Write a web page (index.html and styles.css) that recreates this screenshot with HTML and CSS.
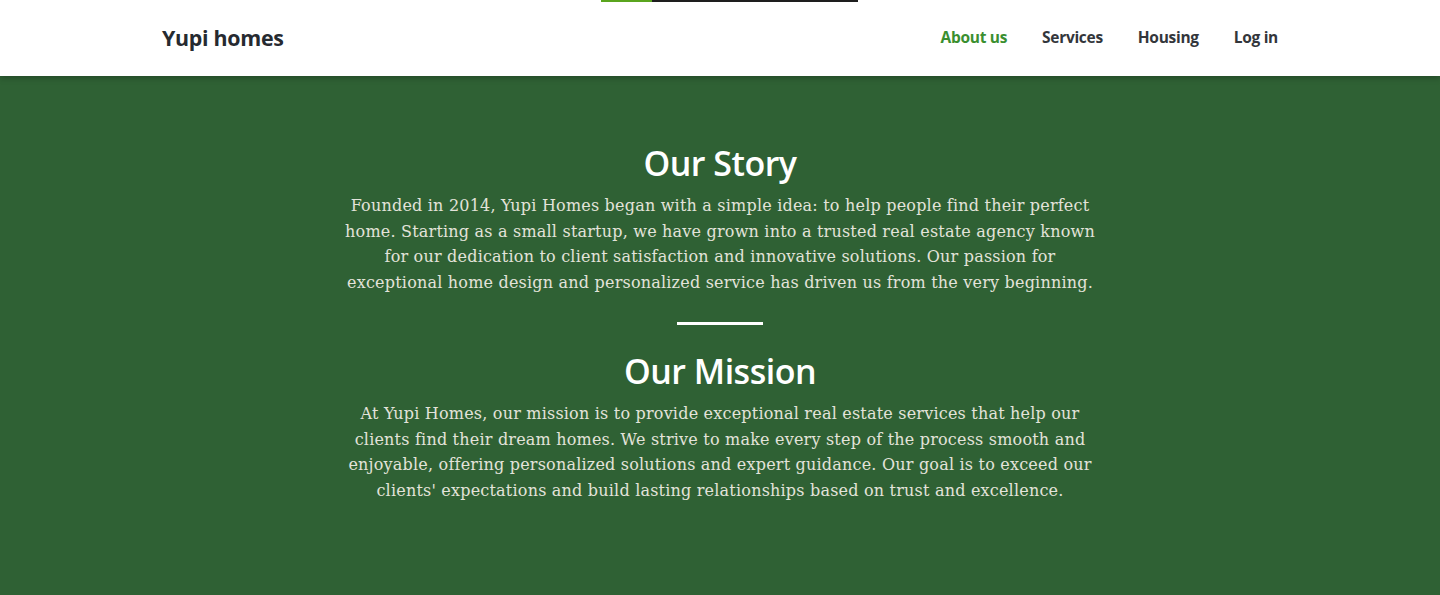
FILE: index.html
```html
<!DOCTYPE html>
<html lang="en">
<head>
<meta charset="utf-8">
<title>Yupi homes - About us</title>
<link rel="stylesheet" href="styles.css">
</head>
<body>
<div class="progress"><div class="progress-fill" style="width:20%"></div></div>
<header class="header">
  <div class="container header-inner">
    <a class="logo" href="#">Yupi homes</a>
    <nav class="nav">
      <a class="nav-link active" href="#">About us</a>
      <a class="nav-link" href="#">Services</a>
      <a class="nav-link" href="#">Housing</a>
      <a class="nav-link" href="#">Log in</a>
    </nav>
  </div>
</header>
<main class="about">
  <section class="block">
    <h2 class="title">Our Story</h2>
    <p class="text">Founded in 2014, Yupi Homes began with a simple idea: to help people find their perfect home. Starting as a small startup, we have grown into a trusted real estate agency known for our dedication to client satisfaction and innovative solutions. Our passion for exceptional home design and personalized service has driven us from the very beginning.</p>
  </section>
  <div class="divider"></div>
  <section class="block">
    <h2 class="title">Our Mission</h2>
    <p class="text">At Yupi Homes, our mission is to provide exceptional real estate services that help our clients find their dream homes. We strive to make every step of the process smooth and enjoyable, offering personalized solutions and expert guidance. Our goal is to exceed our clients' expectations and build lasting relationships based on trust and excellence.</p>
  </section>
</main>
</body>
</html>
```
FILE: styles.css
```css
* { box-sizing: border-box; }
html, body { margin: 0; padding: 0; }
body {
  background: #2f6134;
  font-family: "Open Sans", "Noto Sans", sans-serif;
  min-height: 595px;
}
.progress {
  position: absolute;
  top: 0;
  left: 601px;
  width: 257px;
  height: 2px;
  background: #1e1e1e;
  z-index: 10;
}
.progress-fill { height: 100%; background: #5aa51e; }
.header {
  background: #fff;
  height: 76px;
  box-shadow: 0 2px 6px rgba(0,0,0,0.25);
  position: relative;
  z-index: 2;
}
.container {
  max-width: 1140px;
  margin: 0 auto;
  padding: 0 12px;
}
.header-inner {
  display: flex;
  align-items: center;
  justify-content: space-between;
  height: 76px;
  padding-bottom: 2px;
}
.logo {
  font-size: 21.4px;
  font-weight: 700;
  color: #262a30;
  text-decoration: none;
  letter-spacing: -0.3px;
}
.nav { display: flex; gap: 35px; }
.nav-link {
  font-size: 15.5px;
  font-weight: 700;
  color: #33363b;
  text-decoration: none;
  letter-spacing: -0.3px;
}
.nav-link.active { color: #3a8f30; }
.about {
  display: flex;
  flex-direction: column;
  align-items: center;
  padding-top: 64px;
  padding-bottom: 80px;
}
.block {
  max-width: 758px;
  text-align: center;
}
.title {
  margin: 0 0 7px;
  color: #fff;
  font-size: 34px;
  font-weight: 600;
  line-height: 46px;
  letter-spacing: -0.5px;
}
.text {
  margin: 0;
  color: #e3e3da;
  font-family: "DejaVu Serif", "Liberation Serif", serif;
  font-size: 16px;
  line-height: 25.7px;
  letter-spacing: 0.2px;
}
.divider {
  width: 86px;
  height: 3px;
  background: #fff;
  margin: 26px 0 23px;
}
```
